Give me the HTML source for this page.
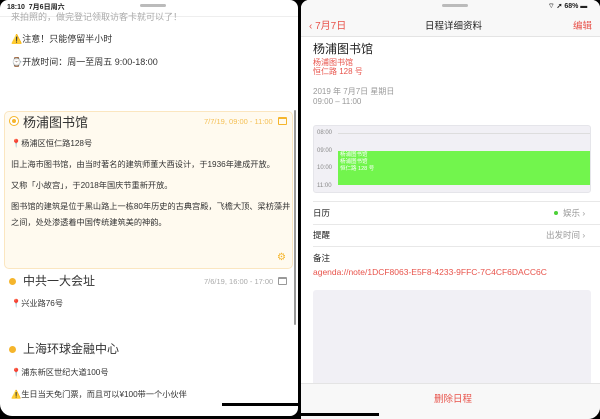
<!DOCTYPE html><html><head><meta charset="utf-8"><style>
*{margin:0;padding:0;box-sizing:border-box}
body{width:600px;height:419px;background:#000;position:relative;overflow:hidden;font-family:"Liberation Sans","Noto Sans CJK SC",sans-serif;}
.p{position:absolute;}
#L{left:0;top:0;width:298px;height:416px;background:#fff;border-radius:8px 8px 8px 12px;overflow:hidden}
#R{left:301px;top:0;width:299px;height:419px;background:#fff;border-radius:8px 8px 12px 0;overflow:hidden}
.t{position:absolute;white-space:nowrap;color:#333}
.c{font-size:8.2px}
</style></head><body>
<div id="L" class="p">
 <div class="t" style="left:7px;top:2px;font-size:7px;color:#222;font-weight:bold">18:10 &nbsp;7月6日周六</div>
 <div class="p" style="left:140px;top:4px;width:26px;height:3px;border-radius:2px;background:#bbb"></div>
 <div class="p" style="left:0;top:16px;width:298px;height:1px;background:#eee"></div>
 <div class="t" style="left:11px;top:10px;font-size:9px;color:#aaa">来拍照的，做完登记领取访客卡就可以了！</div>
 <div class="t" style="left:11px;top:32px;font-size:9px">⚠️注意！只能停留半小时</div>
 <div class="t" style="left:11px;top:55px;font-size:9px">⌚开放时间：周一至周五 9:00-18:00</div>
 <div class="p" style="left:4px;top:111px;width:289px;height:158px;background:#fffaef;border:1px solid #fbe6c0;border-radius:5px"></div>
 <div class="p" style="left:9px;top:116px;width:10px;height:10px;border-radius:50%;border:1.5px solid #f5b52c;background:#fff"><div style="margin:1.5px;width:4px;height:4px;border-radius:50%;background:#f5b52c"></div></div>
 <div class="t" style="left:23px;top:112px;font-size:13px;color:#333">杨浦图书馆</div>
 <div class="t" style="left:204px;top:117px;font-size:7.5px;color:#f5c055">7/7/19, 09:00 - 11:00</div>
 <div class="p" style="left:278px;top:117px;width:9px;height:8px;border:1px solid #f5b52c;border-top-width:2px;border-radius:1px"></div>
 <div class="t c" style="left:11px;top:137px">📍杨浦区恒仁路128号</div>
 <div class="t c" style="left:11px;top:158px">旧上海市图书馆，由当时著名的建筑师董大酉设计，于1936年建成开放。</div>
 <div class="t c" style="left:11px;top:179px">又称「小故宫」，于2018年国庆节重新开放。</div>
 <div class="t c" style="left:11px;top:200px">图书馆的建筑是位于黑山路上一栋80年历史的古典宫殿，飞檐大顶、梁枋藻井</div>
 <div class="t c" style="left:11px;top:216px">之间，处处渗透着中国传统建筑美的神韵。</div>
 <div class="t" style="left:277px;top:252px;font-size:10px;color:#f5b52c">⚙</div>
 <div class="p" style="left:9px;top:278px;width:7px;height:7px;border-radius:50%;background:#f5b52c"></div>
 <div class="t" style="left:23px;top:272px;font-size:12px">中共一大会址</div>
 <div class="t" style="left:204px;top:277px;font-size:7.5px;color:#aaa">7/6/19, 16:00 - 17:00</div>
 <div class="p" style="left:278px;top:277px;width:9px;height:8px;border:1px solid #999;border-top-width:2px;border-radius:1px"></div>
 <div class="t c" style="left:11px;top:297px">📍兴业路76号</div>
 <div class="p" style="left:9px;top:346px;width:7px;height:7px;border-radius:50%;background:#f5b52c"></div>
 <div class="t" style="left:23px;top:340px;font-size:12px">上海环球金融中心</div>
 <div class="t c" style="left:11px;top:366px">📍浦东新区世纪大道100号</div>
 <div class="t c" style="left:11px;top:388px">⚠️生日当天免门票，而且可以¥100带一个小伙伴</div>
 <div class="p" style="left:294px;top:110px;width:2px;height:215px;border-radius:1px;background:#999"></div>
 <div class="p" style="left:222px;top:403px;width:76px;height:3px;background:#000"></div>
</div>
<div class="p" style="left:298px;top:0;width:3px;height:419px;background:#000"></div>
<div id="R" class="p">
 <div class="p" style="left:0;top:0;width:299px;height:37px;background:#f8f8f8;border-bottom:1px solid #e4e4e4"></div>
 <div class="p" style="left:141px;top:4px;width:26px;height:3px;border-radius:2px;background:#bbb"></div>
 <div class="t" style="left:247px;top:2px;font-size:7px;color:#222;font-weight:bold">⌔ ➚ 68% ▬</div>
 <div class="t" style="left:8px;top:17px;font-size:10px;color:#e8534b">‹ 7月7日</div>
 <div class="t" style="left:124px;top:18px;font-size:9.5px;color:#222">日程详细资料</div>
 <div class="t" style="left:272px;top:18px;font-size:9.5px;color:#e8534b">编辑</div>
 <div class="t" style="left:12px;top:40px;font-size:12px;color:#222">杨浦图书馆</div>
 <div class="t" style="left:12px;top:57px;font-size:8px;color:#e8534b">杨浦图书馆</div>
 <div class="t" style="left:12px;top:66px;font-size:8px;color:#e8534b">恒仁路 128 号</div>
 <div class="t" style="left:12px;top:86px;font-size:8px;color:#999">2019 年 7月7日 星期日</div>
 <div class="t" style="left:12px;top:97px;font-size:8px;color:#999">09:00 – 11:00</div>
 <div class="p" style="left:12px;top:125px;width:278px;height:68px;background:#f1f0f5;border:1px solid #e5e5ea;border-radius:3px"></div>
 <div class="t" style="left:16px;top:130px;font-size:6px;color:#888">08:00</div>
 <div class="t" style="left:16px;top:148px;font-size:6px;color:#888">09:00</div>
 <div class="t" style="left:16px;top:165px;font-size:6px;color:#888">10:00</div>
 <div class="t" style="left:16px;top:183px;font-size:6px;color:#888">11:00</div>
 <div class="p" style="left:37px;top:133px;width:252px;height:1px;background:#ddd"></div>
 <div class="p" style="left:37px;top:151px;width:252px;height:34px;background:#72f54d"></div>
 <div class="t" style="left:39px;top:152px;font-size:5.5px;color:#fff;line-height:7px">杨浦图书馆<br>杨浦图书馆<br>恒仁路 128 号</div>
 <div class="p" style="left:12px;top:201px;width:287px;height:1px;background:#e8e8e8"></div>
 <div class="t" style="left:12px;top:207px;font-size:8.5px;color:#222">日历</div>
 <div class="p" style="left:253px;top:211px;width:4px;height:4px;border-radius:50%;background:#4cd137"></div>
 <div class="t" style="left:262px;top:207px;font-size:8.5px;color:#999">娱乐 ›</div>
 <div class="p" style="left:12px;top:224px;width:287px;height:1px;background:#e8e8e8"></div>
 <div class="t" style="left:12px;top:229px;font-size:8.5px;color:#222">提醒</div>
 <div class="t" style="left:245px;top:229px;font-size:8.5px;color:#999">出发时间 ›</div>
 <div class="p" style="left:12px;top:246px;width:287px;height:1px;background:#e8e8e8"></div>
 <div class="t" style="left:12px;top:252px;font-size:8.5px;color:#222">备注</div>
 <div class="t" style="left:12px;top:267px;font-size:8.5px;color:#e8534b">agenda://note/1DCF8063-E5F8-4233-9FFC-7C4CF6DACC6C</div>
 <div class="p" style="left:12px;top:290px;width:278px;height:110px;background:#f1f0f5;border-radius:3px"></div>
 <div class="p" style="left:0;top:383px;width:299px;height:36px;background:#f8f8f8;border-top:1px solid #e4e4e4"></div>
 <div class="t" style="left:133px;top:391px;font-size:9.5px;color:#e8534b">删除日程</div>
 <div class="p" style="left:0;top:413px;width:78px;height:3px;background:#000"></div>
</div>
</body></html>
